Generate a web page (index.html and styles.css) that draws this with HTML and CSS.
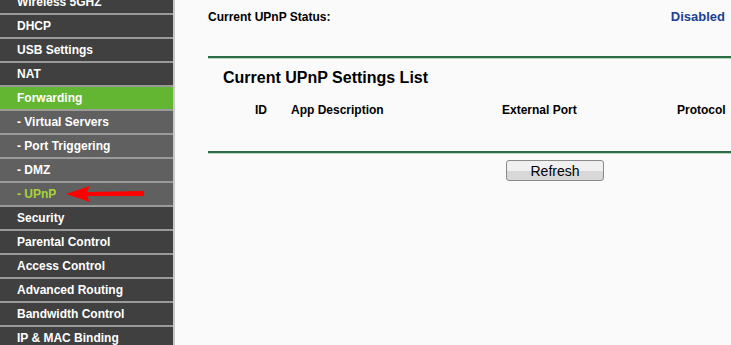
FILE: index.html
```html
<!DOCTYPE html>
<html lang="en">
<head>
    <meta charset="UTF-8">
    <title>UPnP</title>
    <link rel="stylesheet" href="styles.css">
</head>
<body>
    <div class="menu">
        <ul>
            <li><a>Wireless 5GHZ</a></li>
            <li><a>DHCP</a></li>
            <li><a>USB Settings</a></li>
            <li><a>NAT</a></li>
            <li><a class="active">Forwarding</a></li>
            <li class="sub"><a>- Virtual Servers</a></li>
            <li class="sub"><a>- Port Triggering</a></li>
            <li class="sub"><a>- DMZ</a></li>
            <li class="sub">
                <a class="current">- UPnP</a>
                <svg class="arrow" width="84" height="18" viewBox="0 0 84 18">
                    <path d="M0 9 L24 1 L21 7 L78 6 L78 11 L21 11 L24 17 Z" fill="#f00"/>
                </svg>
            </li>
            <li><a>Security</a></li>
            <li><a>Parental Control</a></li>
            <li><a>Access Control</a></li>
            <li><a>Advanced Routing</a></li>
            <li><a>Bandwidth Control</a></li>
            <li><a>IP &amp; MAC Binding</a></li>
        </ul>
    </div>

    <div class="main">
        <div class="status-row">
            <span>Current UPnP Status:</span>
            <span class="status-value">Disabled</span>
        </div>
        <div class="divider"></div>

        <h2 class="list-title">Current UPnP Settings List</h2>
        <div class="list-head">
            <span></span>
            <span>ID</span>
            <span>App Description</span>
            <span>External Port</span>
            <span>Protocol</span>
        </div>
        <div class="divider"></div>

        <div class="actions">
            <button class="btn">Refresh</button>
        </div>
    </div>
</body>
</html>
```

FILE: styles.css
```css
* {
    margin: 0;
    padding: 0;
    box-sizing: border-box;
    font-family: "Liberation Sans", Arial, sans-serif;
}

body {
    display: flex;
    background-color: #fafafa;
    height: 345px;
    overflow: hidden;
}

/* Menu */
.menu {
    width: 175px;
    flex-shrink: 0;
    background-color: #404040;
    border-right: 2px solid #c8c8c8;
}

.menu ul {
    list-style: none;
    margin-top: -9px;
}

.menu li {
    position: relative;
    height: 24px;
    border-bottom: 2px solid #9a9a9a;
    background-color: #404040;
}

.menu li.sub {
    background-color: #606060;
}

.menu a {
    display: block;
    height: 22px;
    line-height: 22px;
    padding-left: 17px;
    color: #fff;
    font-size: 12px;
    font-weight: bold;
}

.menu a.active {
    background-color: #62b632;
}

.menu a.current {
    color: #a6d43a;
}

.arrow {
    position: absolute;
    left: 66px;
    top: 2px;
}

/* Main */
.main {
    flex: 1;
    padding-left: 33px;
}

.status-row {
    display: flex;
    justify-content: space-between;
    height: 35px;
    line-height: 34px;
    padding-right: 6px;
    font-size: 12px;
    font-weight: bold;
    color: #000;
}

.status-value {
    color: #1a3f94;
    font-size: 13px;
}

.divider {
    height: 3px;
    margin-top: 21px;
    border-top: 2px solid #2f6b45;
    border-bottom: 1px solid #b7d8bf;
}

.list-title {
    margin-top: 8px;
    padding-left: 15px;
    font-size: 16px;
    line-height: 22px;
}

.list-head {
    display: grid;
    grid-template-columns: 47px 36px 211px 175px auto;
    margin-top: 13px;
    font-size: 12px;
    font-weight: bold;
    line-height: 16px;
}

.list-head + .divider {
    margin-top: 33px;
}

.actions {
    padding-top: 6px;
    padding-left: 298px;
}

.btn {
    width: 98px;
    height: 21px;
    font-size: 14px;
    color: #000;
    border: 1px solid #8a8a8a;
    border-radius: 3px;
    background: linear-gradient(#f0f0f0 50%, #d8d8d8 50%);
}
```
